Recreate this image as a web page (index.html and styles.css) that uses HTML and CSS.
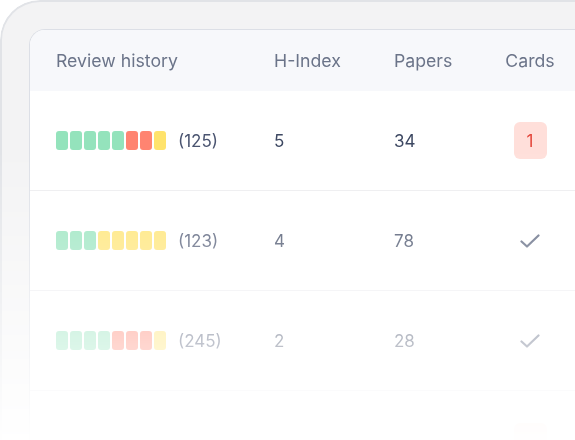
FILE: index.html
```html
<!DOCTYPE html>
<html lang="en">

<head>
    <meta charset="UTF-8">
    <meta name="viewport" content="width=device-width, initial-scale=1.0">
    <title>Reviewers</title>
    <link rel="stylesheet" href="styles.css">
</head>

<body>
    <div class="frame">
        <div class="table-card">
            <div class="row head">
                <div class="cell">Review history</div>
                <div class="cell">H-Index</div>
                <div class="cell">Papers</div>
                <div class="cell center">Cards</div>
            </div>

            <div class="row">
                <div class="cell history">
                    <div class="blocks">
                        <span class="b g"></span><span class="b g"></span><span class="b g"></span><span class="b g"></span><span class="b g"></span><span class="b r"></span><span class="b r"></span><span class="b y"></span>
                    </div>
                    <span class="count">(125)</span>
                </div>
                <div class="cell">5</div>
                <div class="cell">34</div>
                <div class="cell center"><span class="badge">1</span></div>
            </div>

            <div class="row">
                <div class="cell history">
                    <div class="blocks">
                        <span class="b g"></span><span class="b g"></span><span class="b g"></span><span class="b y"></span><span class="b y"></span><span class="b y"></span><span class="b y"></span><span class="b y"></span>
                    </div>
                    <span class="count">(123)</span>
                </div>
                <div class="cell">4</div>
                <div class="cell">78</div>
                <div class="cell center">
                    <svg class="check" width="20" height="14" viewBox="0 0 20 14"><path d="M1.5 7.5 L7 12.5 L18.5 1.5" fill="none" stroke="currentColor" stroke-width="2.2" stroke-linecap="round" stroke-linejoin="round"/></svg>
                </div>
            </div>

            <div class="row">
                <div class="cell history">
                    <div class="blocks">
                        <span class="b g"></span><span class="b g"></span><span class="b g"></span><span class="b g"></span><span class="b r"></span><span class="b r"></span><span class="b r"></span><span class="b y"></span>
                    </div>
                    <span class="count">(245)</span>
                </div>
                <div class="cell">2</div>
                <div class="cell">28</div>
                <div class="cell center">
                    <svg class="check" width="20" height="14" viewBox="0 0 20 14"><path d="M1.5 7.5 L7 12.5 L18.5 1.5" fill="none" stroke="currentColor" stroke-width="2.2" stroke-linecap="round" stroke-linejoin="round"/></svg>
                </div>
            </div>

            <div class="row last">
                <div class="cell"></div>
                <div class="cell"></div>
                <div class="cell"></div>
                <div class="cell center"><span class="badge"></span></div>
            </div>
        </div>
    </div>
</body>

</html>
```

FILE: styles.css
```css
html,
body {
    margin: 0;
    padding: 0;
    background: #ffffff;
}

body {
    font-family: 'Inter', 'Liberation Sans', sans-serif;
    width: 575px;
    height: 440px;
    overflow: hidden;
}

/* outer device frame, fading out toward the bottom */
.frame {
    box-sizing: border-box;
    width: 575px;
    height: 440px;
    overflow: hidden;
    padding: 27px 0 0 27px;
    background: #f3f3f4;
    border-top: 2px solid #e1e3e7;
    border-left: 2px solid #e1e3e7;
    border-top-left-radius: 40px;
    -webkit-mask-image: linear-gradient(to bottom, #000 150px, rgba(0, 0, 0, 0.02) 440px);
    mask-image: linear-gradient(to bottom, #000 150px, rgba(0, 0, 0, 0.02) 440px);
}

.table-card {
    background: #ffffff;
    border-top: 1px solid #dcdfe6;
    border-left: 1px solid #dcdfe6;
    border-top-left-radius: 16px;
    height: 100%;
    overflow: hidden;
}

.row {
    display: grid;
    grid-template-columns: 218px 120px 110px 52px;
    align-items: center;
    height: 100px;
    padding-left: 26px;
    border-bottom: 1px solid #ececef;
    box-sizing: border-box;
    font-size: 17px;
    color: #3d4862;
}

.row.head {
    height: 61px;
    background: #f7f8fb;
    border-bottom: none;
    color: #6b7489;
    font-size: 17.7px;
}

.row.last {
    border-bottom: none;
}

.cell.center {
    display: flex;
    justify-content: center;
}

.history {
    display: flex;
    align-items: center;
    gap: 12px;
}

.blocks {
    display: flex;
    gap: 2px;
}

.b {
    width: 12px;
    height: 19px;
    border-radius: 3px;
}

.b.g {
    background: #94e3bc;
}

.b.r {
    background: #ff8471;
}

.b.y {
    background: #ffe36c;
}

.count {
    color: #4a5470;
}

.badge {
    display: flex;
    align-items: center;
    justify-content: center;
    width: 33px;
    height: 37px;
    border-radius: 6px;
    background: #ffdfda;
    color: #e4473c;
}

.check {
    color: #56607a;
}
```
